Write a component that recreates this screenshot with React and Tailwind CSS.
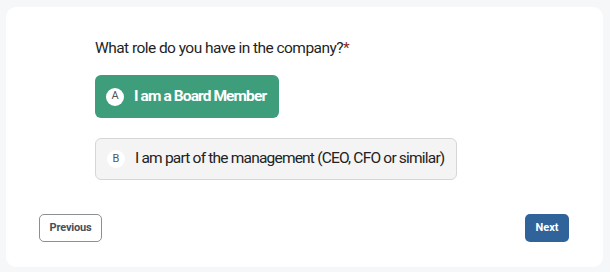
export default function App() {
  return (
    <div className="w-[610px] h-[272px] bg-[#f6f7f9] pt-[7px] pl-[6px] pr-[7px] pb-[5px]" style={{ fontFamily: "Roboto, 'Liberation Sans', sans-serif" }}>
      <div className="h-[260px] bg-white rounded-[10px] flex flex-col">
        <div className="pl-[89px] pt-[31px] flex flex-col items-start">
          <div className="text-[15.5px] leading-[20px] tracking-[-0.55px] text-[#1f1f1f] h-[20px]">
            What role do you have in the company?<span className="text-[#8b2a1a]">*</span>
          </div>
          <button className="mt-[17px] h-[43px] pl-[11px] pr-[13px] rounded-[6px] bg-[#3e9e7b] flex items-center gap-[10px] text-white">
            <span className="w-[18px] h-[18px] rounded-full bg-white text-[#555] text-[11px] flex items-center justify-center">A</span>
            <span className="text-[15.5px] font-bold tracking-[-0.9px]">I am a Board Member</span>
          </button>
          <button className="mt-[20px] h-[42px] pl-[11px] pr-[12px] rounded-[6px] bg-[#f4f4f4] border border-[#d6d6d6] flex items-center gap-[10px] text-[#222]">
            <span className="w-[18px] h-[18px] rounded-full bg-white text-[#555] text-[11px] flex items-center justify-center">B</span>
            <span className="text-[15.5px] tracking-[-0.8px]">I am part of the management (CEO, CFO or similar)</span>
          </button>
        </div>
        <div className="mt-[34px] pl-[33px] pr-[34px] flex justify-between">
          <button className="w-[63px] h-[28px] rounded-[5px] border border-[#8a8f96] bg-white text-[11px] font-bold tracking-[-0.2px] text-[#4a4f57]">Previous</button>
          <button className="w-[44px] h-[28px] rounded-[5px] bg-[#2f6399] text-[11px] font-bold text-white">Next</button>
        </div>
      </div>
    </div>
  );
}
